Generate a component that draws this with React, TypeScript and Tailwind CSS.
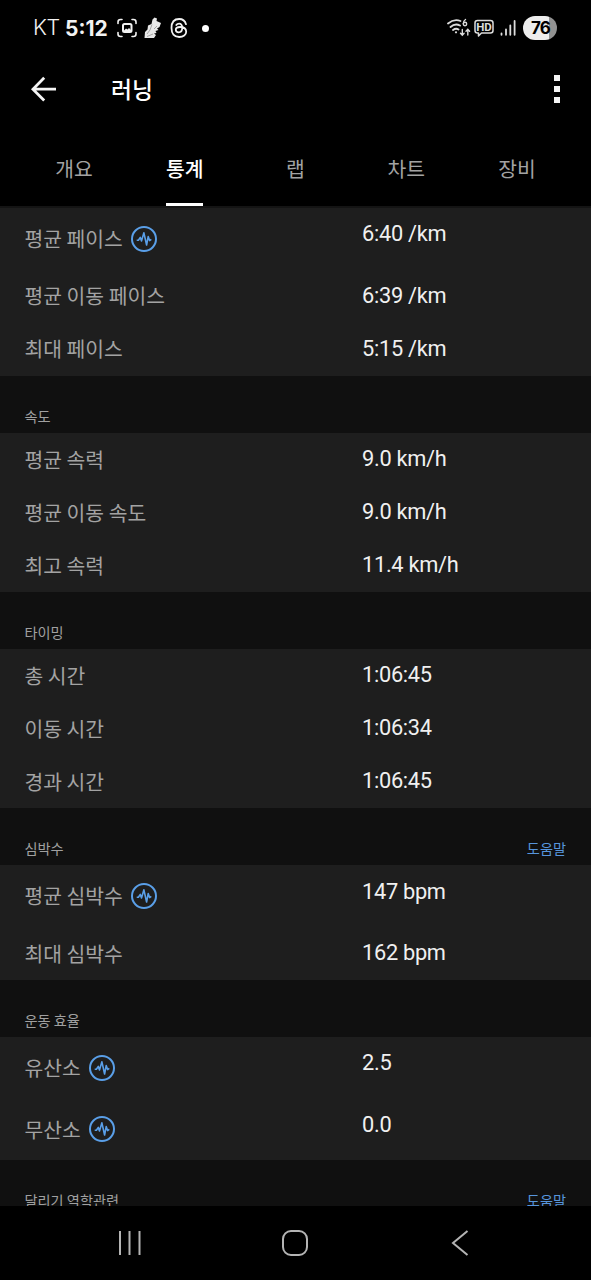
import { useState } from 'react';

interface StatRow {
  label: string;
  value: string;
  badge?: boolean;
}

interface StatSection {
  id: string;
  title?: string;
  help?: boolean;
  rows: StatRow[];
}

const TABS = ['개요', '통계', '랩', '차트', '장비'];

const SECTIONS: StatSection[] = [
  {
    id: 'pace',
    rows: [
      { label: '평균 페이스', value: '6:40 /km', badge: true },
      { label: '평균 이동 페이스', value: '6:39 /km' },
      { label: '최대 페이스', value: '5:15 /km' }
    ]
  },
  {
    id: 'speed',
    title: '속도',
    rows: [
      { label: '평균 속력', value: '9.0 km/h' },
      { label: '평균 이동 속도', value: '9.0 km/h' },
      { label: '최고 속력', value: '11.4 km/h' }
    ]
  },
  {
    id: 'timing',
    title: '타이밍',
    rows: [
      { label: '총 시간', value: '1:06:45' },
      { label: '이동 시간', value: '1:06:34' },
      { label: '경과 시간', value: '1:06:45' }
    ]
  },
  {
    id: 'heart',
    title: '심박수',
    help: true,
    rows: [
      { label: '평균 심박수', value: '147 bpm', badge: true },
      { label: '최대 심박수', value: '162 bpm' }
    ]
  },
  {
    id: 'effect',
    title: '운동 효율',
    rows: [
      { label: '유산소', value: '2.5', badge: true },
      { label: '무산소', value: '0.0', badge: true }
    ]
  },
  {
    id: 'dynamics',
    title: '달리기 역학관련',
    help: true,
    rows: []
  }
];

function PulseBadge() {
  return (
    <svg viewBox="0 0 26 26" className="w-[26px] h-[26px] ml-[8.5px] mt-px shrink-0" fill="none" stroke="#5a9fe8">
      <circle cx="13" cy="13" r="12" strokeWidth="2" />
      <path
        d="M5.7 14.2H7.4L9.3 11.4L10.5 15L12.9 6.8L15.6 19L17.2 10.6L18.6 14.6L20.3 13.4"
        strokeWidth="1.6"
        strokeLinejoin="round"
      />
    </svg>
  );
}

function StatusBar() {
  return (
    <div className="h-14 shrink-0 flex items-center pl-[33px] pr-[34px] text-[#f2f2f2]">
      <span className="w-[26px] text-[21.5px] font-light leading-none font-['Inter',sans-serif] tracking-[-0.4px]">KT</span>
      <span className="ml-[6px] w-[43px] text-[21px] font-bold leading-none font-['Inter',sans-serif]">5:12</span>

      {/* Capture */}
      <svg viewBox="0 0 20 20" className="w-5 h-5 ml-[9px]" fill="none" stroke="currentColor" strokeWidth="1.6" strokeLinecap="round">
        <path d="M1 5.5V4Q1 1.5 3.5 1.5H5M15 1.5H16.5Q19 1.5 19 4V5.5M19 14.5V16Q19 18.5 16.5 18.5H15M5 18.5H3.5Q1 18.5 1 16V14.5" />
        <rect x="6" y="6" width="8.5" height="8" rx="1.5" strokeWidth="2" />
        <path d="M6.5 13L9 10.5L10.5 11.5L12 10L14 12V14H6.5Z" fill="currentColor" stroke="none" />
      </svg>

      {/* Running shoe */}
      <svg viewBox="0 0 18 22" className="w-[18px] h-[22px] ml-[7px]">
        <path d="M10.5 0.5L13 1.5L12.5 4L17 6L15.5 10L13 11.5L14.5 13L11.5 14L12.5 16L10 16.5L12 18L10 21H0.5L1 15L3.5 12.5L4 8.5L7.5 7L8.5 2.5Z" fill="#e8e8e8" />
        <path d="M8 7.5L6 13L3 17M13 9L10 12M3 19.5L9 17" stroke="#777" strokeWidth="0.6" fill="none" />
      </svg>

      {/* Threads */}
      <svg viewBox="0 0 18 20" className="w-[18px] h-5 ml-[8px]" fill="none" stroke="currentColor" strokeWidth="1.8" strokeLinecap="round">
        <path d="M16 6.2C15 2.7 12.6 1 9.2 1C4.2 1 1.5 4.4 1.5 10s2.7 9 7.7 9c4.1 0 7-2.4 7-5.3C16.2 10.5 13.4 9 10 9c-2.7 0-4.2 1.1-4.2 2.8C5.8 13.3 7 14.3 8.7 14.3c2.2 0 3.5-1.5 3.5-4.3C12.2 7 11.1 5.7 9.1 5.7c-1.3 0-2.2.5-2.8 1.4" />
      </svg>

      <span className="w-[7px] h-[7px] ml-[14px] rounded-full bg-white" />

      {/* Wi-Fi 6 */}
      <svg viewBox="0 0 24 20" className="w-6 h-5 ml-auto" fill="none" stroke="#dcdcdc" strokeWidth="1.8" strokeLinecap="round">
        <path d="M1 5.5Q7 0.5 13.5 3M3.5 9Q8 5 13 7.5M6 12Q9 9.8 11.5 11.5" />
        <circle cx="9" cy="14.3" r="1.1" fill="#dcdcdc" stroke="none" />
        <path d="M18.5 1.5Q16.3 3 16.3 5.7" strokeWidth="1.4" />
        <circle cx="18" cy="6" r="1.7" strokeWidth="1.4" />
        <path d="M15.3 11.5V17M13.5 15.3L15.3 17.2L17.1 15.3M20.8 17V11.5M19 13.2L20.8 11.3L22.6 13.2" strokeWidth="1.4" />
      </svg>

      {/* HD voice */}
      <svg viewBox="0 0 20 18" className="w-5 h-[18px] ml-[3px]" fill="none" stroke="#dcdcdc" strokeWidth="1.5" strokeLinejoin="round">
        <path d="M3.5 1.5H16.5Q19 1.5 19 4V11.5Q19 14 16.5 14H7.5L4.5 17V14H3.5Q1 14 1 11.5V4Q1 1.5 3.5 1.5Z" />
        <text x="10" y="11.8" textAnchor="middle" fontSize="11.5" fontWeight="700" fontFamily="Roboto, sans-serif" fill="#dcdcdc" stroke="none">
          HD
        </text>
      </svg>

      {/* Signal */}
      <svg viewBox="0 0 16 16" className="w-4 h-4 ml-[6px]" stroke="#dcdcdc" strokeWidth="1.8" strokeLinecap="round">
        <path d="M1.5 13.5V14.8M6 9.5V14.8M10.3 5.5V14.8M14.6 1V14.8" />
      </svg>

      {/* Battery */}
      <div className="w-[34px] h-6 ml-[7px] rounded-full overflow-hidden flex items-center justify-center bg-linear-to-r from-[#ededed] from-76% to-[#929292] to-76%">
        <span className="pl-px text-[17px] font-bold leading-none text-black font-['Inter',sans-serif] tracking-[-0.8px]">76</span>
      </div>
    </div>
  );
}

function AppBar() {
  return (
    <header className="h-[66px] shrink-0 flex items-center pl-[31px] pr-[31px] text-white">
      <svg viewBox="0 0 26 26" className="w-[26px] h-[26px]" fill="none" stroke="#f5f5f5" strokeWidth="2.8">
        <path d="M25 13.2H2M13.2 1.8L1.9 13.2L13.2 24.6" />
      </svg>
      <h1 className="ml-[54px] text-[22.8px] font-medium leading-none">러닝</h1>
      <div className="ml-auto flex flex-col gap-[5px]">
        <span className="w-[6px] h-[6px] bg-[#f5f5f5]" />
        <span className="w-[6px] h-[6px] bg-[#f5f5f5]" />
        <span className="w-[6px] h-[6px] bg-[#f5f5f5]" />
      </div>
    </header>
  );
}

function Row({ row }: { row: StatRow }) {
  return (
    <div className={`flex items-start ${row.badge ? 'h-[61.5px]' : 'h-[53px]'}`}>
      <div className="w-[362px] h-full pl-[24.5px] pb-px flex items-center text-[20.4px] text-[#a3a3a3]">
        <span className="leading-none">{row.label}</span>
        {row.badge && <PulseBadge />}
      </div>
      <div className="h-[53px] flex items-center text-[21.8px] text-[#f0f0f0] tracking-[-0.3px] font-['Roboto',sans-serif]">
        {row.value}
      </div>
    </div>
  );
}

export default function App() {
  const [activeTab, setActiveTab] = useState('통계');

  return (
    <div className="w-full h-screen flex flex-col overflow-hidden bg-black font-['Noto_Sans_CJK_KR',sans-serif]">
      <StatusBar />
      <AppBar />

      {/* Tabs */}
      <nav className="h-[84px] shrink-0 flex pl-[18.5px] pr-[18.5px]">
        {TABS.map((tab) => (
          <button
            key={tab}
            onClick={() => setActiveTab(tab)}
            className={`flex-1 flex flex-col items-center pt-[36px] text-[20.4px] leading-[20px] ${
              activeTab === tab ? 'text-white font-medium' : 'text-[#a3a3a3]'
            }`}
          >
            <span>{tab}</span>
            {activeTab === tab && <span className="mt-auto w-[37px] h-[3px] bg-white" />}
          </button>
        ))}
      </nav>

      {/* Stats */}
      <main className="flex-1 min-h-0 overflow-hidden bg-[#101010] border-t-2 border-[#141414]">
        {SECTIONS.map((section) => (
          <section key={section.id}>
            {section.title && (
              <div className="h-[57.3px] pl-[24.5px] pr-[25px] pb-[8px] flex items-end justify-between text-[14.2px] leading-[18px]">
                <h2 className="text-[#a0a0a0]">{section.title}</h2>
                {section.help && <span className="text-[#5795dc]">도움말</span>}
              </div>
            )}
            <div className="bg-[#1e1e1e]">
              {section.rows.map((row) => (
                <Row key={row.label} row={row} />
              ))}
            </div>
          </section>
        ))}
      </main>

      {/* System navigation */}
      <footer className="h-[74px] shrink-0 flex items-center pl-[116px] bg-black">
        <svg viewBox="0 0 26 26" className="w-[26px] h-[26px]" stroke="#b4b4b4" strokeWidth="2">
          <path d="M4 1V25M13.5 1V25M23.5 1V25" />
        </svg>
        <svg viewBox="0 0 26 26" className="w-[26px] h-[26px] ml-[140px]" fill="none" stroke="#b4b4b4" strokeWidth="2">
          <rect x="1" y="1" width="24" height="24" rx="8" />
        </svg>
        <svg viewBox="0 0 18 26" className="w-[18px] h-[26px] ml-[143px]" fill="none" stroke="#b4b4b4" strokeWidth="2">
          <path d="M16.5 1L2 13L16.5 25" />
        </svg>
      </footer>
    </div>
  );
}
